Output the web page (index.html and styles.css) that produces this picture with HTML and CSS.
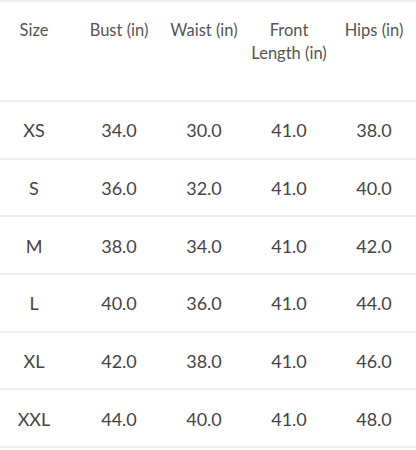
FILE: index.html
```html
<!DOCTYPE html>
<html>
<head>
<meta charset="utf-8">
<link rel="stylesheet" href="styles.css">
</head>
<body>
<div class="table">
  <div class="row head">
    <div class="cell">Size</div>
    <div class="cell">Bust (in)</div>
    <div class="cell">Waist (in)</div>
    <div class="cell">Front<br>Length (in)</div>
    <div class="cell">Hips (in)</div>
  </div>
  <div class="row"><div class="cell">XS</div><div class="cell">34.0</div><div class="cell">30.0</div><div class="cell">41.0</div><div class="cell">38.0</div></div>
  <div class="row"><div class="cell">S</div><div class="cell">36.0</div><div class="cell">32.0</div><div class="cell">41.0</div><div class="cell">40.0</div></div>
  <div class="row"><div class="cell">M</div><div class="cell">38.0</div><div class="cell">34.0</div><div class="cell">41.0</div><div class="cell">42.0</div></div>
  <div class="row"><div class="cell">L</div><div class="cell">40.0</div><div class="cell">36.0</div><div class="cell">41.0</div><div class="cell">44.0</div></div>
  <div class="row"><div class="cell">XL</div><div class="cell">42.0</div><div class="cell">38.0</div><div class="cell">41.0</div><div class="cell">46.0</div></div>
  <div class="row"><div class="cell">XXL</div><div class="cell">44.0</div><div class="cell">40.0</div><div class="cell">41.0</div><div class="cell">48.0</div></div>
</div>
</body>
</html>
```
FILE: styles.css
```css
html, body {
  margin: 0;
  padding: 0;
  background: #fff;
}
body {
  font-family: Lato, "Noto Sans", sans-serif;
  color: #444;
}
.table {
  display: flex;
  flex-direction: column;
  border-top: 2px solid #eeeeee;
}
.row {
  display: grid;
  grid-template-columns: 76.5px 85px 85px 85px 85px;
  height: 55.7px;
  align-items: center;
  border-bottom: 2px solid #eeeeee;
  font-size: 18px;
}
.row .cell {
  text-align: center;
  white-space: nowrap;
  padding-top: 1px;
}
.row .cell:first-child {
  padding-right: 8.5px;
}
.head {
  height: 98px;
  align-items: start;
  font-size: 16.5px;
  line-height: 23px;
  color: #555;
}
.head .cell {
  padding-top: 17px;
}
```
